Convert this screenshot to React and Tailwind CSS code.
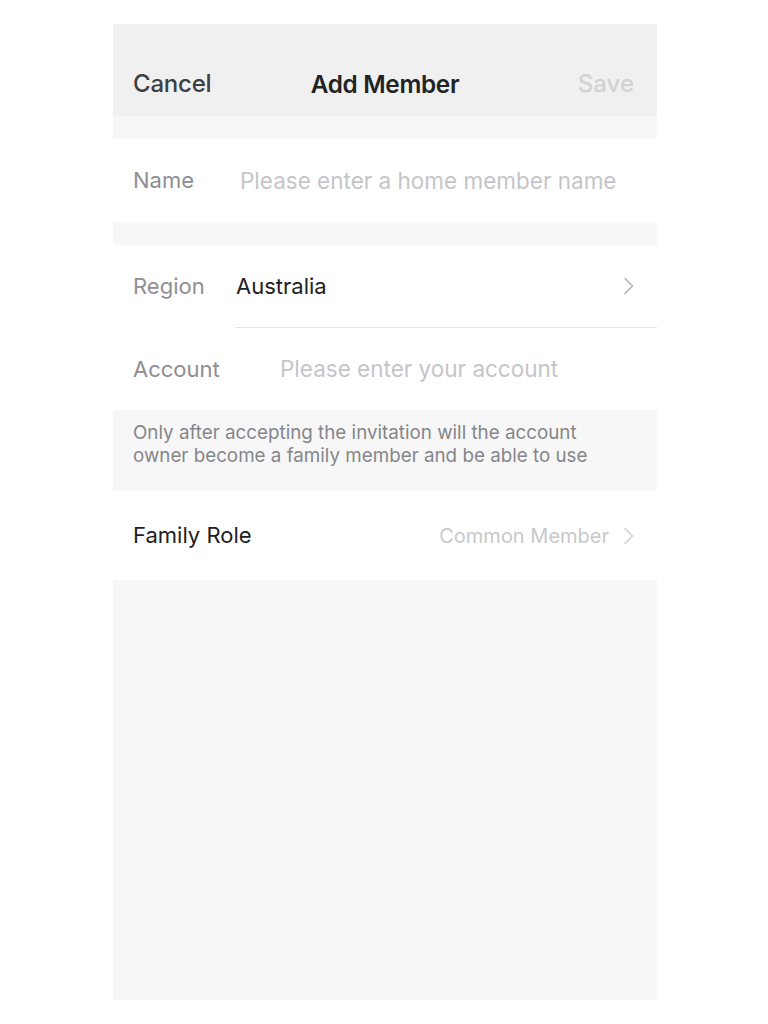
import React from "react";

function Chevron({ className }) {
  return (
    <svg width="12" height="20" viewBox="0 0 12 20" fill="none" className={className}>
      <path d="M2 2.5 L9.5 10 L2 17.5" stroke="currentColor" strokeWidth="1.6" strokeLinecap="round" strokeLinejoin="round" />
    </svg>
  );
}

export default function App() {
  return (
    <div className="min-h-[1024px] bg-white pt-[24px]" style={{ fontFamily: "Inter, 'Liberation Sans', Arial, sans-serif" }}>
      <div className="flex h-[976px] w-[544px] flex-col bg-[#f7f7f7] ml-[113px]">
        {/* Header */}
        <div className="h-[92px] bg-[#f0f0f0] pt-[40px]">
          <div className="relative flex h-[40px] items-center justify-between pl-[20px] pr-[23px]">
            <span className="text-[24px] font-medium tracking-[-0.2px] text-[#3d4043]">Cancel</span>
            <span className="absolute left-1/2 -translate-x-1/2 text-[24.3px] font-semibold tracking-[-0.3px] text-[#222325]">Add Member</span>
            <span className="text-[24px] font-medium text-[#d2d2d2]">Save</span>
          </div>
        </div>
        <div className="h-[23px]" />
        {/* Name */}
        <div className="flex h-[83px] items-center bg-white pl-[20px]">
          <span className="w-[107px] text-[22px] text-[#8e8e93]">Name</span>
          <span className="text-[22.5px] text-[#c5c5c9]">Please enter a home member name</span>
        </div>
        <div className="h-[23px]" />
        {/* Region + Account */}
        <div className="bg-white">
          <div className="flex h-[82px] items-center pl-[20px] pr-[22px]">
            <span className="w-[103px] text-[22px] text-[#8e8e93]">Region</span>
            <span className="flex-1 text-[22px] text-[#1f2023]">Australia</span>
            <Chevron className="text-[#b4b4b8]" />
          </div>
          <div className="ml-[122px] h-px bg-[#e6e6e8]" />
          <div className="flex h-[82px] items-center pl-[20px]">
            <span className="w-[147px] text-[22px] text-[#8e8e93]">Account</span>
            <span className="text-[22.5px] text-[#c5c5c9]">Please enter your account</span>
          </div>
        </div>
        {/* Note */}
        <div className="h-[81px] pl-[20px] pt-[11px] text-[18.8px] leading-[23px] text-[#85868b]">
          <div>Only after accepting the invitation will the account</div>
          <div>owner become a family member and be able to use</div>
        </div>
        {/* Family Role */}
        <div className="flex h-[89px] items-center bg-white pl-[20px] pr-[22px]">
          <span className="flex-1 text-[22px] text-[#1f2023]">Family Role</span>
          <span className="mr-[14px] text-[20px] text-[#c8c8cc]">Common Member</span>
          <Chevron className="text-[#d0d0d4]" />
        </div>
        <div className="flex-1" />
      </div>
    </div>
  );
}
